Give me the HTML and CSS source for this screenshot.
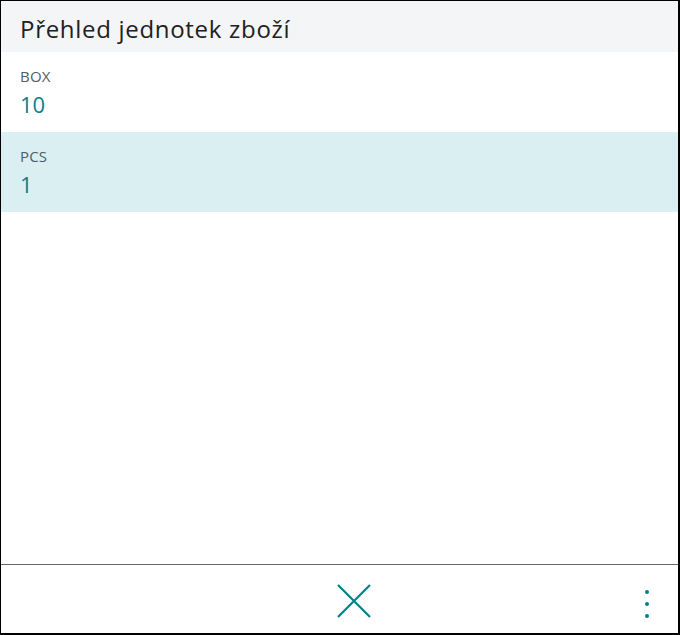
FILE: index.html
```html
<!DOCTYPE html>
<html lang="cs">
<head>
<meta charset="utf-8">
<title>Přehled jednotek zboží</title>
<link rel="stylesheet" href="styles.css">
</head>
<body>
<div class="frame">
  <header class="header">
    <h1 class="title">Přehled jednotek zboží</h1>
  </header>
  <ul class="list">
    <li class="row">
      <span class="label">BOX</span>
      <span class="value">10</span>
    </li>
    <li class="row row-selected">
      <span class="label">PCS</span>
      <span class="value">1</span>
    </li>
  </ul>
  <footer class="footer">
    <span class="spacer"></span>
    <button class="btn-close" aria-label="Zavřít">
      <svg width="34" height="34" viewBox="0 0 34 34"><path d="M1 1 L33 33 M33 1 L1 33" stroke="#00818a" stroke-width="2.2" fill="none"/></svg>
    </button>
    <button class="btn-more" aria-label="Další">
      <svg width="6" height="30" viewBox="0 0 6 30"><circle cx="3" cy="3" r="2" fill="#00818a"/><circle cx="3" cy="15" r="2" fill="#00818a"/><circle cx="3" cy="27" r="2" fill="#00818a"/></svg>
    </button>
  </footer>
</div>
</body>
</html>
```
FILE: styles.css
```css
* { box-sizing: border-box; }
html, body { margin: 0; padding: 0; background: #fff; }
body { font-family: "Segoe UI", "Open Sans", "Noto Sans", sans-serif; }
.frame {
  width: 680px;
  height: 635px;
  border: 1px solid #000;
  border-right-width: 2px;
  border-bottom-width: 2px;
  display: flex;
  flex-direction: column;
  background: #fff;
}
.header {
  height: 51px;
  background: #f4f5f7;
  padding: 0 19px;
  display: flex;
  align-items: center;
}
.title {
  margin: 4px 0 0;
  font-size: 24px;
  font-weight: 400;
  color: #212121;
  letter-spacing: 0.7px;
  line-height: 32px;
}
.list {
  list-style: none;
  margin: 0;
  padding: 0;
  flex: 1;
}
.row {
  height: 80px;
  padding: 14px 19px 0;
  display: flex;
  flex-direction: column;
}
.row-selected { background: #d9eff1; }
.label {
  font-size: 15px;
  color: #505c6d;
  line-height: 20px;
  letter-spacing: 0.2px;
}
.value {
  font-size: 22px;
  color: #0b7f87;
  line-height: 36px;
}
.footer {
  height: 69px;
  border-top: 1px solid #666;
  display: grid;
  grid-template-columns: 1fr auto 1fr;
  align-items: center;
  padding: 4px 0 0 29px;
}
.btn-close, .btn-more {
  background: none;
  border: 0;
  padding: 0;
  display: flex;
  align-items: center;
  justify-content: center;
}
.btn-close { width: 34px; height: 34px; }
.btn-more {
  justify-self: end;
  width: 20px;
  height: 34px;
  margin: 6px 21px 0 0;
}
```
